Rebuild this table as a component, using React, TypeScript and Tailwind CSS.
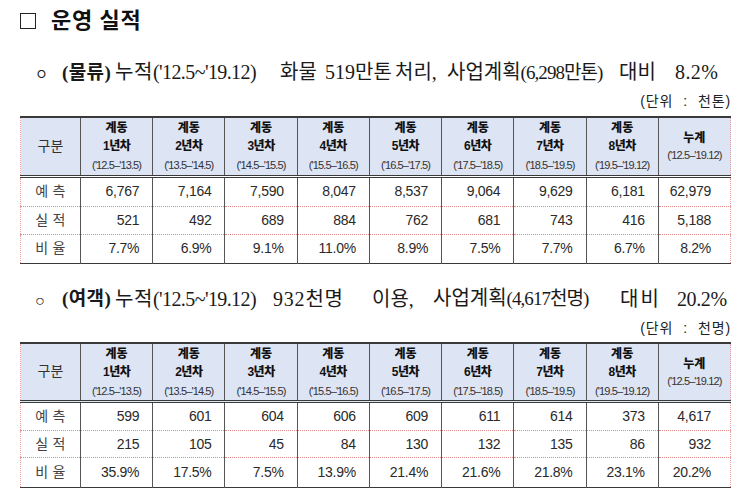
const serif = "font-['Liberation_Serif','Noto_Sans_CJK_KR',serif]";
const sans = "font-['Liberation_Sans','Noto_Sans_CJK_KR',sans-serif]";

type Row = { label: string; values: string[] };

const periods = [
  "('12.5–'13.5)",
  "('13.5–'14.5)",
  "('14.5–'15.5)",
  "('15.5–'16.5)",
  "('16.5–'17.5)",
  "('17.5–'18.5)",
  "('18.5–'19.5)",
  "('19.5–'19.12)",
];

const cargo: Row[] = [
  { label: "예 측", values: ["6,767", "7,164", "7,590", "8,047", "8,537", "9,064", "9,629", "6,181", "62,979"] },
  { label: "실 적", values: ["521", "492", "689", "884", "762", "681", "743", "416", "5,188"] },
  { label: "비 율", values: ["7.7%", "6.9%", "9.1%", "11.0%", "8.9%", "7.5%", "7.7%", "6.7%", "8.2%"] },
];

const passenger: Row[] = [
  { label: "예 측", values: ["599", "601", "604", "606", "609", "611", "614", "373", "4,617"] },
  { label: "실 적", values: ["215", "105", "45", "84", "130", "132", "135", "86", "932"] },
  { label: "비 율", values: ["35.9%", "17.5%", "7.5%", "13.9%", "21.4%", "21.6%", "21.8%", "23.1%", "20.2%"] },
];

function Small({ children }: { children: React.ReactNode }) {
  return <span className="text-[19px] tracking-[-0.05em]">{children}</span>;
}

// a heading line is a row of segments; widths pin each word to its place
function Heading({ parts }: { parts: [React.ReactNode, number][] }) {
  return (
    <div className={`${serif} h-[30px] flex items-center text-[20px] pl-[15px] whitespace-nowrap text-[#1a1a1a]`}>
      {parts.map(([node, w], i) => (
        <span key={i} className="shrink-0" style={{ width: w || undefined }}>
          {node}
        </span>
      ))}
    </div>
  );
}

function Unit({ b }: { b: string }) {
  return (
    <div className={`${sans} h-[18px] w-[711px] flex items-center justify-end gap-[10px] text-[14px] tracking-[0.06em] text-[#222]`}>
      <span>(단위</span>
      <span>:</span>
      <span>{b}</span>
    </div>
  );
}

function ResultTable({ rows, heights }: { rows: Row[]; heights: number[] }) {
  return (
    <table
      className={`${sans} border-collapse table-fixed w-[711px] text-[#2a2a2a] border-t-2 border-t-[#3a3a3a] border-b-[1.5px] border-b-[#3a3a3a] border-l border-l-[#e6a0a0] border-r border-r-[#e6a0a0]`}
      style={{ borderLeftStyle: "dotted", borderRightStyle: "dotted", borderTopStyle: "solid", borderBottomStyle: "solid" }}
    >
      <colgroup>
        <col className="w-[60px]" />
        {Array.from({ length: 9 }).map((_, i) => (
          <col key={i} />
        ))}
      </colgroup>
      <thead>
        <tr className="bg-[#dde4f4] h-[59px] border-b-[3px] border-double border-b-[#3a3a3a]">
          <th className="font-normal text-[14px] text-[#333]">구분</th>
          {periods.map((p, i) => (
            <th key={p} className="border-l border-[#555] font-normal leading-none">
              <div className="flex flex-col items-center pt-[1px]">
                <span className="text-[12px] font-black leading-[18px] text-[#111]">계동</span>
                <span className="text-[12px] font-black leading-[19px] text-[#111] tracking-[-0.04em]">{i + 1}년차</span>
                <span className="text-[11px] tracking-[-0.08em] leading-[18px] text-[#333]">{p}</span>
              </div>
            </th>
          ))}
          <th className="border-l border-[#555] font-normal leading-none">
            <div className="flex flex-col items-center">
              <span className="text-[12px] font-black leading-[18px] text-[#111]">누계</span>
              <span className="text-[11px] tracking-[-0.08em] leading-[16px] text-[#333]">('12.5–'19.12)</span>
            </div>
          </th>
        </tr>
      </thead>
      <tbody>
        {rows.map((r, ri) => (
          <tr
            key={r.label}
            className={ri < rows.length - 1 ? "border-b border-dotted border-b-[#e08a8a]" : ""}
            style={{ height: heights[ri] }}
          >
            <td className="text-center text-[14px] text-[#444] tracking-[0.02em]">{r.label}</td>
            {r.values.map((v, vi) => (
              <td
                key={vi}
                className={`border-l border-l-[#555] text-right text-[14px] tracking-[-0.02em] ${vi === 8 ? "pr-[19px]" : "pr-[13px]"}`}
                style={{ borderLeftStyle: "solid" }}
              >
                {v}
              </td>
            ))}
          </tr>
        ))}
      </tbody>
    </table>
  );
}

export default function App() {
  return (
    <div className="w-[745px] h-[501px] bg-white overflow-hidden pl-[20px] text-[#1a1a1a]">
      <div className="h-[40px] flex items-center gap-[15px] pt-[1px]">
        <span className="inline-block w-[16px] h-[16px] border-[1.5px] border-[#222]" />
        <span className={`${sans} text-[22px] font-bold tracking-[0.03em] text-[#111]`}>운영 실적</span>
      </div>

      <div className="mt-[17px]">
        <Heading
          parts={[
            [<span className="text-[14px]">ㅇ</span>, 27],
            [<b className="text-[19px] tracking-[0.02em]">(물류)</b>, 53],
            [<><span className="tracking-[0.03em]">누적</span><span className="text-[20px] tracking-[-0.03em]">('12.5~'19.12)</span></>, 165],
            ["화물", 45],
            ["519만톤", 70],
            ["처리,", 52],
            [<>사업계획<Small>(6,298만톤)</Small></>, 172],
            ["대비", 56],
            [<span className="tracking-[0.02em]">8.2%</span>, 0],
          ]}
        />
      </div>

      <div className="mt-[5px]">
        <Unit b="천톤)" />
      </div>

      <div className="mt-[6px]">
        <ResultTable rows={cargo} heights={[30, 28, 29]} />
      </div>

      <div className="mt-[20px]">
        <Heading
          parts={[
            [<span className="text-[16px]">○</span>, 27],
            [<b className="text-[19px] tracking-[0.02em]">(여객)</b>, 53],
            [<><span className="tracking-[0.03em]">누적</span><span className="text-[20px] tracking-[-0.03em]">('12.5~'19.12)</span></>, 158],
            [<span className="tracking-[0.04em]">932천명</span>, 99],
            ["이용,", 61],
            [<>사업계획<Small>(4,617천명)</Small></>, 187],
            [<span className="tracking-[0.1em]">대비</span>, 57],
            [<span className="tracking-[-0.02em]">20.2%</span>, 0],
          ]}
        />
      </div>

      <div className="mt-[6px]">
        <Unit b="천명)" />
      </div>

      <div className="mt-[4px]">
        <ResultTable rows={passenger} heights={[29, 27, 30]} />
      </div>
    </div>
  );
}
